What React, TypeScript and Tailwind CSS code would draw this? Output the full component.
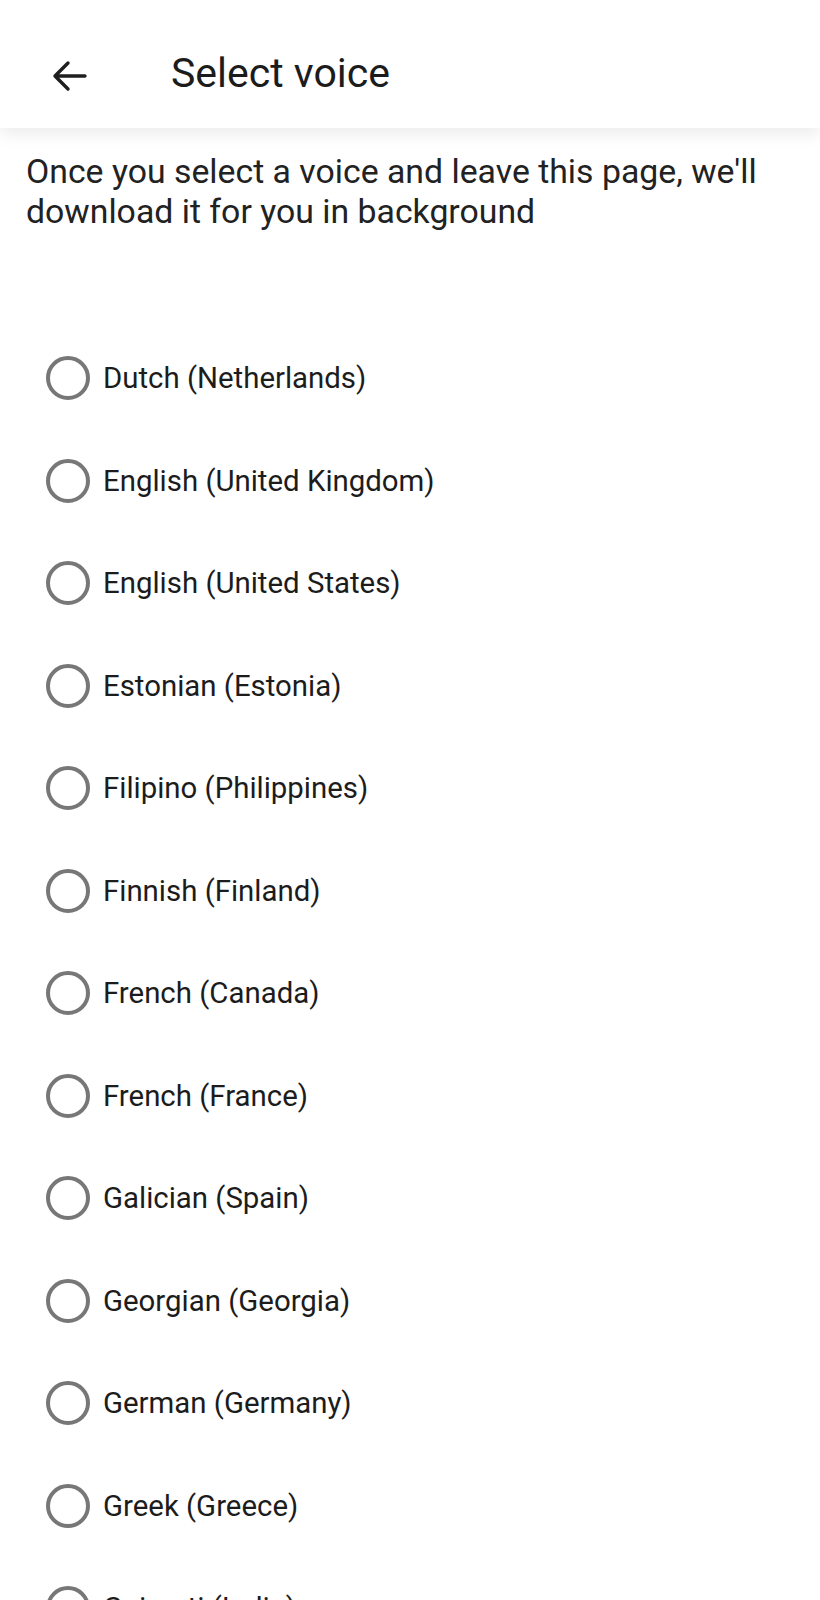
import React from "react";

const voices = [
  "Dutch (Netherlands)",
  "English (United Kingdom)",
  "English (United States)",
  "Estonian (Estonia)",
  "Filipino (Philippines)",
  "Finnish (Finland)",
  "French (Canada)",
  "French (France)",
  "Galician (Spain)",
  "Georgian (Georgia)",
  "German (Germany)",
  "Greek (Greece)",
  "Gujarati (India)",
];

export default function App() {
  return (
    <div
      className="w-[820px] h-[1600px] overflow-hidden bg-white text-[#1c1c1c]"
      style={{ fontFamily: "Roboto, 'Noto Sans', sans-serif" }}
    >
      <header className="relative z-10 h-[128px] pt-[24px] bg-white flex items-center shadow-[0_6px_16px_rgba(0,0,0,0.08)]">
        <div className="w-[171px] flex items-center pl-[51px]">
          <svg width="36" height="36" viewBox="0 0 36 36" fill="none">
            <path
              d="M34 18H4M17 5L4 18L17 31"
              stroke="#1f1f1f"
              strokeWidth="3.4"
              strokeLinecap="round"
              strokeLinejoin="round"
            />
          </svg>
        </div>
        <h1 className="text-[41px] leading-none font-normal text-[#1c1c1c] -mt-[6px]">Select voice</h1>
      </header>
      <p className="mt-[24px] pl-[26px] pr-[20px] text-[33.8px] leading-[40px] text-[#222]">
        Once you select a voice and leave this page, we'll download it for you in background
      </p>
      <ul className="mt-[95px]">
        {voices.map((v) => (
          <li key={v} className="h-[102.5px] flex items-center pl-[46px] gap-[13px]">
            <span className="w-[44px] h-[44px] rounded-full border-[4px] border-[#777] shrink-0" />
            <span className="text-[29.4px] text-[#1c1c1c]">{v}</span>
          </li>
        ))}
      </ul>
    </div>
  );
}
